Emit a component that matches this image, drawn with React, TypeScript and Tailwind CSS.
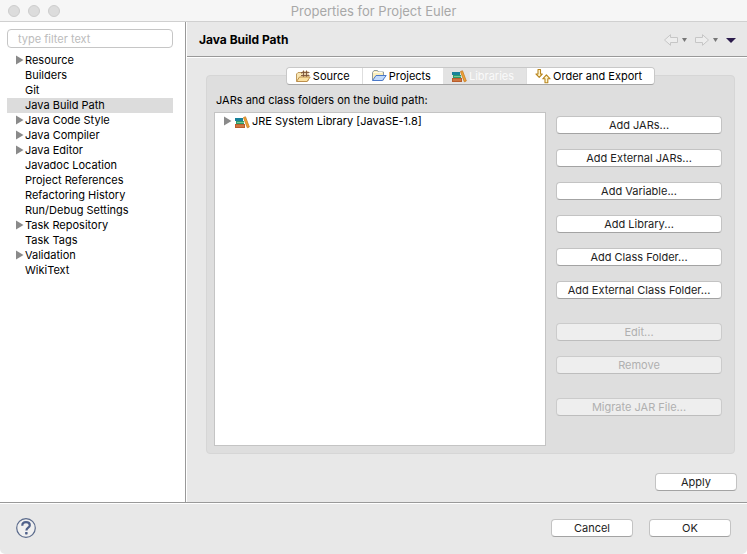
import type { ReactNode } from "react";

const categories = [
  { name: "Resource", expandable: true },
  { name: "Builders" },
  { name: "Git" },
  { name: "Java Build Path", selected: true },
  { name: "Java Code Style", expandable: true },
  { name: "Java Compiler", expandable: true },
  { name: "Java Editor", expandable: true },
  { name: "Javadoc Location" },
  { name: "Project References" },
  { name: "Refactoring History" },
  { name: "Run/Debug Settings" },
  { name: "Task Repository", expandable: true },
  { name: "Task Tags" },
  { name: "Validation", expandable: true },
  { name: "WikiText" },
];

function Triangle() {
  return (
    <svg className="block h-[11px] w-2 shrink-0" viewBox="0 0 8 11" aria-hidden="true">
      <path d="M0 0.500 7.500 5 0 9.500Z" fill="#8a8a8a" />
    </svg>
  );
}

function PackageFolderIcon() {
  return (
    <svg className="h-4 w-4 shrink-0" viewBox="0 0 16 16" aria-hidden="true">
      <path d="M1.500 13V6L3 4.500h3l1 1.500H13V13Z" fill="#f9e6b4" stroke="#c09a5c" />
      <rect x="7" y="3" width="6.500" height="6" fill="#e6cfaa" />
      <path d="M6 4.500h8.500M6 7.500h8.500M8.500 2.500v6.500M11.500 2.500v6.500" stroke="#7a5238" strokeWidth="0.900" />
      <path d="M1.500 13.500 4.500 9H15.200L12 13.500Z" fill="#fbe0a0" stroke="#bd8f4c" />
    </svg>
  );
}

function ProjectFolderIcon() {
  return (
    <svg className="h-4 w-4 shrink-0" viewBox="0 0 16 16" aria-hidden="true">
      <path d="M1.500 12V4.500L3 2.500h3.500l1 1.500H12.500V12Z" fill="#fbeebb" stroke="#8e9a9d" />
      <path d="M2.500 4.500h9" stroke="#fffbe8" />
      <path d="M1.500 12.500 5 7.500H15.200L11.500 12.500Z" fill="#c2dafa" stroke="#4a78c9" />
    </svg>
  );
}

function BooksIcon() {
  return (
    <svg className="h-4 w-4 shrink-0" viewBox="0 0 16 16" aria-hidden="true">
      <rect x="1" y="4" width="8" height="3" fill="#18819a" />
      <rect x="2" y="7" width="8" height="3" fill="#2c9b69" />
      <path d="M3 8.500h7" stroke="#76c69a" />
      <rect x="1" y="10" width="10" height="4" fill="#b95d2c" />
      <path d="M2 12h8" stroke="#e29257" />
      <path d="M9.500 3.500 11.500 2.800 15.300 13 13.300 13.800Z" fill="#efa634" stroke="#c77823" strokeWidth="0.800" />
    </svg>
  );
}

function OrderIcon() {
  return (
    <svg className="h-4 w-4 shrink-0" viewBox="0 0 16 16" aria-hidden="true">
      <g fill="#fff6d0" stroke="#b9861f" strokeWidth="1.100" strokeLinejoin="round">
        <path d="M3 1.500h2.500v4.500h1.800L4.200 9.300 1 6h2Z" />
        <path d="M10 14.800h2.800v-4h2.300L11.400 6.800 7.800 10.800H10Z" />
      </g>
    </svg>
  );
}

function HistoryArrow({ back }: { back?: boolean }) {
  return (
    <svg className="h-3 w-[14px]" viewBox="0 0 14 12" aria-hidden="true">
      <path
        d={back ? "M0.500 6 6.500 0.700V3.500H13.500V8.500H6.500V11.300Z" : "M13.500 6 7.500 0.700V3.500H0.500V8.500H7.500V11.300Z"}
        fill="#ededed"
        stroke="#c6c6c6"
      />
    </svg>
  );
}

function DownMark() {
  return (
    <svg className="h-1 w-[5px]" viewBox="0 0 5 4" aria-hidden="true">
      <path d="M0 0h5L2.500 4Z" fill="#777" />
    </svg>
  );
}

function PushButton({ children, disabled }: { children: ReactNode; disabled?: boolean }) {
  return (
    <button
      type="button"
      disabled={disabled}
      className="h-[18px] w-full rounded-[4px] border border-[#c3c3c3] border-b-[#a3a3a3] bg-white text-center leading-4 text-[#222] disabled:border-[#cbcbcb] disabled:border-b-[#bdbdbd] disabled:bg-[#eee] disabled:text-[#b0b0b0]"
    >
      {children}
    </button>
  );
}

function Tab({ icon, label, selected }: { icon: ReactNode; label: string; selected?: boolean }) {
  return (
    <button
      type="button"
      role="tab"
      aria-selected={!!selected}
      className={
        selected
          ? "flex items-center gap-[2px] bg-[#e3e3e3] pr-3 pl-2 text-[#fafafa]"
          : "flex items-center gap-[2px] border-l border-[#dedede] bg-white pr-3 pl-2 text-black first:border-l-0"
      }
    >
      {icon}
      {label}
    </button>
  );
}

export default function App() {
  return (
    <div className="bg-white font-['Inter','Liberation_Sans',sans-serif] text-[11px] leading-[15px] text-black">
      <div className="flex min-h-screen flex-col overflow-hidden rounded-b-[5px] bg-[#e8e8e8]">
        <header className="grid h-[22px] shrink-0 grid-cols-[1fr_auto_1fr] items-center border-b border-[#d0d0d0] bg-[#f6f6f6]">
          <div className="flex gap-2 pl-2">
            <button type="button" aria-label="Close" className="size-3 rounded-full border border-[#cdcdcd] bg-[#dcdcdc]" />
            <button type="button" aria-label="Minimize" className="size-3 rounded-full border border-[#cdcdcd] bg-[#dcdcdc]" />
            <button type="button" aria-label="Zoom" className="size-3 rounded-full border border-[#cdcdcd] bg-[#dcdcdc]" />
          </div>
          <h1 className="pt-[2px] text-[13px] text-[#a8a8a8]">Properties for Project Euler</h1>
        </header>

        <div className="flex grow">
          <aside className="w-[186px] shrink-0 border-r border-[#999] bg-white pt-[7px] pr-3 pl-[7px]">
            <input
              type="text"
              aria-label="Filter categories"
              placeholder="type filter text"
              className="block h-[19px] w-full rounded-[4px] border border-[#c6c6c6] bg-white px-[10px] placeholder:text-[#bcbcbc]"
            />
            <ul className="pt-[5px]">
              {categories.map((c) => (
                <li key={c.name} className={c.selected ? "flex items-center bg-[#dcdcdc]" : "flex items-center"}>
                  <span className="w-[18px] pl-[9px]">{c.expandable && <Triangle />}</span>
                  {c.name}
                </li>
              ))}
            </ul>
          </aside>

          <main className="flex min-w-0 grow flex-col border-l border-white">
            <div className="flex h-[35px] shrink-0 items-center justify-between border-b border-[#999] pt-[2px] pr-[11px] pl-3">
              <h2 className="text-xs font-bold">Java Build Path</h2>
              <div className="flex items-center gap-2">
                <button type="button" aria-label="Back" disabled className="flex items-center gap-1">
                  <HistoryArrow back />
                  <DownMark />
                </button>
                <button type="button" aria-label="Forward" disabled className="flex items-center gap-1">
                  <HistoryArrow />
                  <DownMark />
                </button>
                <button type="button" aria-label="View menu">
                  <svg className="h-[5px] w-[10px]" viewBox="0 0 10 5" aria-hidden="true">
                    <path d="M0 0h10L5 5Z" fill="#2c1c4c" />
                  </svg>
                </button>
              </div>
            </div>

            <div className="flex grow flex-col border-t border-white pt-[9px] pr-[10px] pb-[11px] pl-[19px]">
              <div className="relative mr-[2px] flex justify-center">
                <div role="tablist" className="flex h-[18px] overflow-hidden rounded-[4px] border border-[#c8c8c8] border-b-[#a5a5a5]">
                  <Tab icon={<PackageFolderIcon />} label="Source" />
                  <Tab icon={<ProjectFolderIcon />} label="Projects" />
                  <Tab icon={<BooksIcon />} label="Libraries" selected />
                  <Tab icon={<OrderIcon />} label="Order and Export" />
                </div>
              </div>

              <section className="-mt-[10px] mr-[2px] flex grow gap-[10px] rounded-[4px] border border-[#d6d6d6] bg-[#dedede] pt-[17px] pr-3 pb-[7px] pl-[7px]">
                <div className="flex min-w-0 grow flex-col gap-1">
                  <h3 className="pl-[2px]">JARs and class folders on the build path:</h3>
                  <ul className="grow border border-[#c4c4c4] bg-white pt-[1px]">
                    <li className="flex items-center pl-[9px]">
                      <Triangle />
                      <span className="flex h-[15px] items-center gap-[2px] pl-[2px]">
                        <BooksIcon />
                        JRE System Library [JavaSE-1.8]
                      </span>
                    </li>
                  </ul>
                </div>
                <div className="flex w-[166px] shrink-0 flex-col gap-6 pt-[23px]">
                  <div className="flex flex-col gap-[15px]">
                    <PushButton>Add JARs...</PushButton>
                    <PushButton>Add External JARs...</PushButton>
                    <PushButton>Add Variable...</PushButton>
                    <PushButton>Add Library...</PushButton>
                    <PushButton>Add Class Folder...</PushButton>
                    <PushButton>Add External Class Folder...</PushButton>
                  </div>
                  <div className="flex flex-col gap-[15px]">
                    <PushButton disabled>Edit...</PushButton>
                    <PushButton disabled>Remove</PushButton>
                  </div>
                  <PushButton disabled>Migrate JAR File...</PushButton>
                </div>
              </section>

              <div className="mt-[19px] w-[82px] self-end">
                <PushButton>Apply</PushButton>
              </div>
            </div>
          </main>
        </div>

        <footer className="shrink-0 border-t border-[#999]">
          <div className="flex items-center justify-between border-t border-white pt-[14px] pr-4 pb-4 pl-4">
            <button type="button" aria-label="Help">
              <svg className="block size-5" viewBox="0 0 20 20" aria-hidden="true">
                <circle cx="10" cy="10" r="9.300" fill="#f0f0f0" stroke="#5b6b8c" strokeWidth="1.200" />
                <path d="M6.300 7.700C6.300 5.300 7.900 4.200 10 4.200S13.800 5.400 13.800 7.300C13.800 9.700 10.400 9.800 10.400 12.500" fill="none" stroke="#50618a" strokeWidth="2.200" />
                <rect x="9.100" y="14" width="2.500" height="2.400" rx="0.600" fill="#50618a" />
              </svg>
            </button>
            <div className="flex gap-4">
              <div className="w-[82px]">
                <PushButton>Cancel</PushButton>
              </div>
              <div className="w-[82px]">
                <PushButton>OK</PushButton>
              </div>
            </div>
          </div>
        </footer>
      </div>
    </div>
  );
}
